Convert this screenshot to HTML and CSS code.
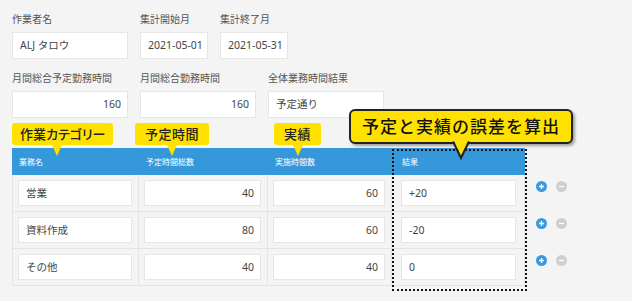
FILE: index.html
```html
<!DOCTYPE html>
<html lang="ja">
<head>
  <meta charset="UTF-8" />
  <title>作業実績</title>
  <link rel="stylesheet" href="styles.css">
</head>
<body>
  <div class="page">
    <div class="form-row">
      <div class="field w-wide">
        <label>作業者名</label>
        <div class="input">ALJ タロウ</div>
      </div>
      <div class="field w-date">
        <label>集計開始月</label>
        <div class="input">2021-05-01</div>
      </div>
      <div class="field w-date">
        <label>集計終了月</label>
        <div class="input">2021-05-31</div>
      </div>
    </div>

    <div class="form-row">
      <div class="field w-wide">
        <label>月間総合予定勤務時間</label>
        <div class="input num">160</div>
      </div>
      <div class="field w-wide">
        <label>月間総合勤務時間</label>
        <div class="input num">160</div>
      </div>
      <div class="field w-wide">
        <label>全体業務時間結果</label>
        <div class="input">予定通り</div>
      </div>
    </div>

    <div class="tag-row">
      <div class="tag-slot slot-category"><span class="tag tag-category">作業カテゴリー</span></div>
      <div class="tag-slot slot-plan"><span class="tag">予定時間</span></div>
      <div class="tag-slot"><span class="tag">実績</span></div>
    </div>

    <div class="grid-area">
      <div class="grid-head">
        <div class="head-cell">業務名</div>
        <div class="head-cell">予定時間総数</div>
        <div class="head-cell">実施時間数</div>
        <div class="head-cell result">結果</div>
      </div>

      <div class="grid-row">
        <div class="cell first"><div class="input">営業</div></div>
        <div class="cell"><div class="input num">40</div></div>
        <div class="cell"><div class="input num">60</div></div>
        <div class="cell result"><div class="input">+20</div></div>
        <div class="actions">
          <svg class="icon" viewBox="0 0 12 12"><circle cx="6" cy="6" r="6" fill="#3a9ae0"/><path d="M6 3.3v5.4M3.3 6h5.4" stroke="#fff" stroke-width="1.4"/></svg>
          <svg class="icon" viewBox="0 0 12 12"><circle cx="6" cy="6" r="6" fill="#cfcfcf"/><path d="M3.3 6h5.4" stroke="#fff" stroke-width="1.4"/></svg>
        </div>
      </div>

      <div class="grid-row">
        <div class="cell first"><div class="input">資料作成</div></div>
        <div class="cell"><div class="input num">80</div></div>
        <div class="cell"><div class="input num">60</div></div>
        <div class="cell result"><div class="input">-20</div></div>
        <div class="actions">
          <svg class="icon" viewBox="0 0 12 12"><circle cx="6" cy="6" r="6" fill="#3a9ae0"/><path d="M6 3.3v5.4M3.3 6h5.4" stroke="#fff" stroke-width="1.4"/></svg>
          <svg class="icon" viewBox="0 0 12 12"><circle cx="6" cy="6" r="6" fill="#cfcfcf"/><path d="M3.3 6h5.4" stroke="#fff" stroke-width="1.4"/></svg>
        </div>
      </div>

      <div class="grid-row">
        <div class="cell first"><div class="input">その他</div></div>
        <div class="cell"><div class="input num">40</div></div>
        <div class="cell"><div class="input num">40</div></div>
        <div class="cell result"><div class="input">0</div></div>
        <div class="actions">
          <svg class="icon" viewBox="0 0 12 12"><circle cx="6" cy="6" r="6" fill="#3a9ae0"/><path d="M6 3.3v5.4M3.3 6h5.4" stroke="#fff" stroke-width="1.4"/></svg>
          <svg class="icon" viewBox="0 0 12 12"><circle cx="6" cy="6" r="6" fill="#cfcfcf"/><path d="M3.3 6h5.4" stroke="#fff" stroke-width="1.4"/></svg>
        </div>
      </div>

      <div class="result-frame"></div>
    </div>

    <div class="callout">
      予定と実績の誤差を算出
      <svg class="callout-tail" viewBox="0 0 20 20"><polygon points="2.5,0 17.5,0 10,16" fill="#ffe100"/><path d="M2 1.5 L10 18 L18 1.5" fill="none" stroke="#222" stroke-width="2" stroke-linejoin="miter"/></svg>
    </div>
  </div>
</body>
</html>
```

FILE: styles.css
```css
* {
  margin: 0;
  padding: 0;
  box-sizing: border-box;
}

html, body {
  height: 100%;
  background: #f4f4f4;
  font-family: "Noto Sans", "Noto Sans CJK JP", sans-serif;
  color: #444;
  overflow: hidden;
}

.page {
  position: relative;
  padding: 12px;
}

.form-row {
  display: flex;
  gap: 12px;
  margin-bottom: 12px;
}

.field label {
  display: block;
  font-size: 10px;
  line-height: 14px;
  color: #555;
  margin-bottom: 6px;
}

.w-wide {
  width: 116px;
}

.w-date {
  width: 68px;
}

.input {
  height: 27px;
  line-height: 25px;
  padding: 0 7px;
  background: #fff;
  border: 1px solid #e6e6e6;
  font-size: 10.5px;
  color: #444;
  white-space: nowrap;
  overflow: hidden;
}

.input.num {
  text-align: right;
  padding-right: 6px;
}

/* yellow annotation tags */
.tag-row {
  display: flex;
  height: 22px;
  margin-top: -8px;
  margin-bottom: 4px;
  position: relative;
  z-index: 2;
}

.slot-category {
  width: 123px;
}

.slot-plan {
  width: 139px;
}

.tag {
  position: relative;
  display: inline-block;
  height: 22px;
  line-height: 22px;
  padding: 0 10px;
  background: #ffe100;
  border-radius: 3px;
  font-size: 13px;
  font-weight: 500;
  color: #222;
  white-space: nowrap;
  font-feature-settings: "palt";
  letter-spacing: 0.5px;
}

.tag::after {
  content: "";
  position: absolute;
  top: 100%;
  left: 50%;
  margin-left: -5px;
  border-top: 11px solid #ffe100;
  border-left: 5px solid transparent;
  border-right: 5px solid transparent;
}

.tag-category {
  padding: 0 8px;
  letter-spacing: 0;
}

.tag-category::after {
  left: 45px;
}

/* task grid */
.grid-area {
  position: relative;
}

.grid-head,
.grid-row {
  display: grid;
  grid-template-columns: 127px 129px 124px 133px auto;
}

.grid-head {
  width: 513px;
  background: #3498db;
}

.head-cell {
  height: 27px;
  line-height: 27px;
  padding-left: 7px;
  font-size: 8px;
  color: #fff;
}

.head-cell.result {
  padding-left: 10px;
}

.cell {
  padding: 5px 6px 5px 5px;
  border-right: 1px solid #e4e4e4;
  border-bottom: 1px solid #e4e4e4;
}

.cell.first {
  border-left: 1px solid #e4e4e4;
}

.cell .input {
  height: 26px;
  line-height: 24px;
}

.cell.result {
  padding: 5px 8px 5px 9px;
}

.actions {
  display: flex;
  gap: 9px;
  padding: 6px 0 0 11px;
}

.icon {
  width: 11px;
  height: 11px;
}

.result-frame {
  position: absolute;
  top: 1px;
  left: 380px;
  width: 135px;
  height: 142px;
  border: 2px dotted #111;
  pointer-events: none;
}

/* big callout */
.callout {
  position: absolute;
  left: 349px;
  top: 109px;
  width: 224px;
  height: 35px;
  line-height: 31px;
  text-align: center;
  background: #ffe100;
  border: 2px solid #222;
  border-radius: 6px;
  box-shadow: 2px 2px 3px rgba(0, 0, 0, 0.35);
  font-size: 17px;
  font-weight: 500;
  letter-spacing: 1px;
  color: #111;
  z-index: 3;
}

.callout-tail {
  position: absolute;
  top: 100%;
  left: 100px;
  width: 20px;
  height: 20px;
  margin-top: -2px;
}
```
